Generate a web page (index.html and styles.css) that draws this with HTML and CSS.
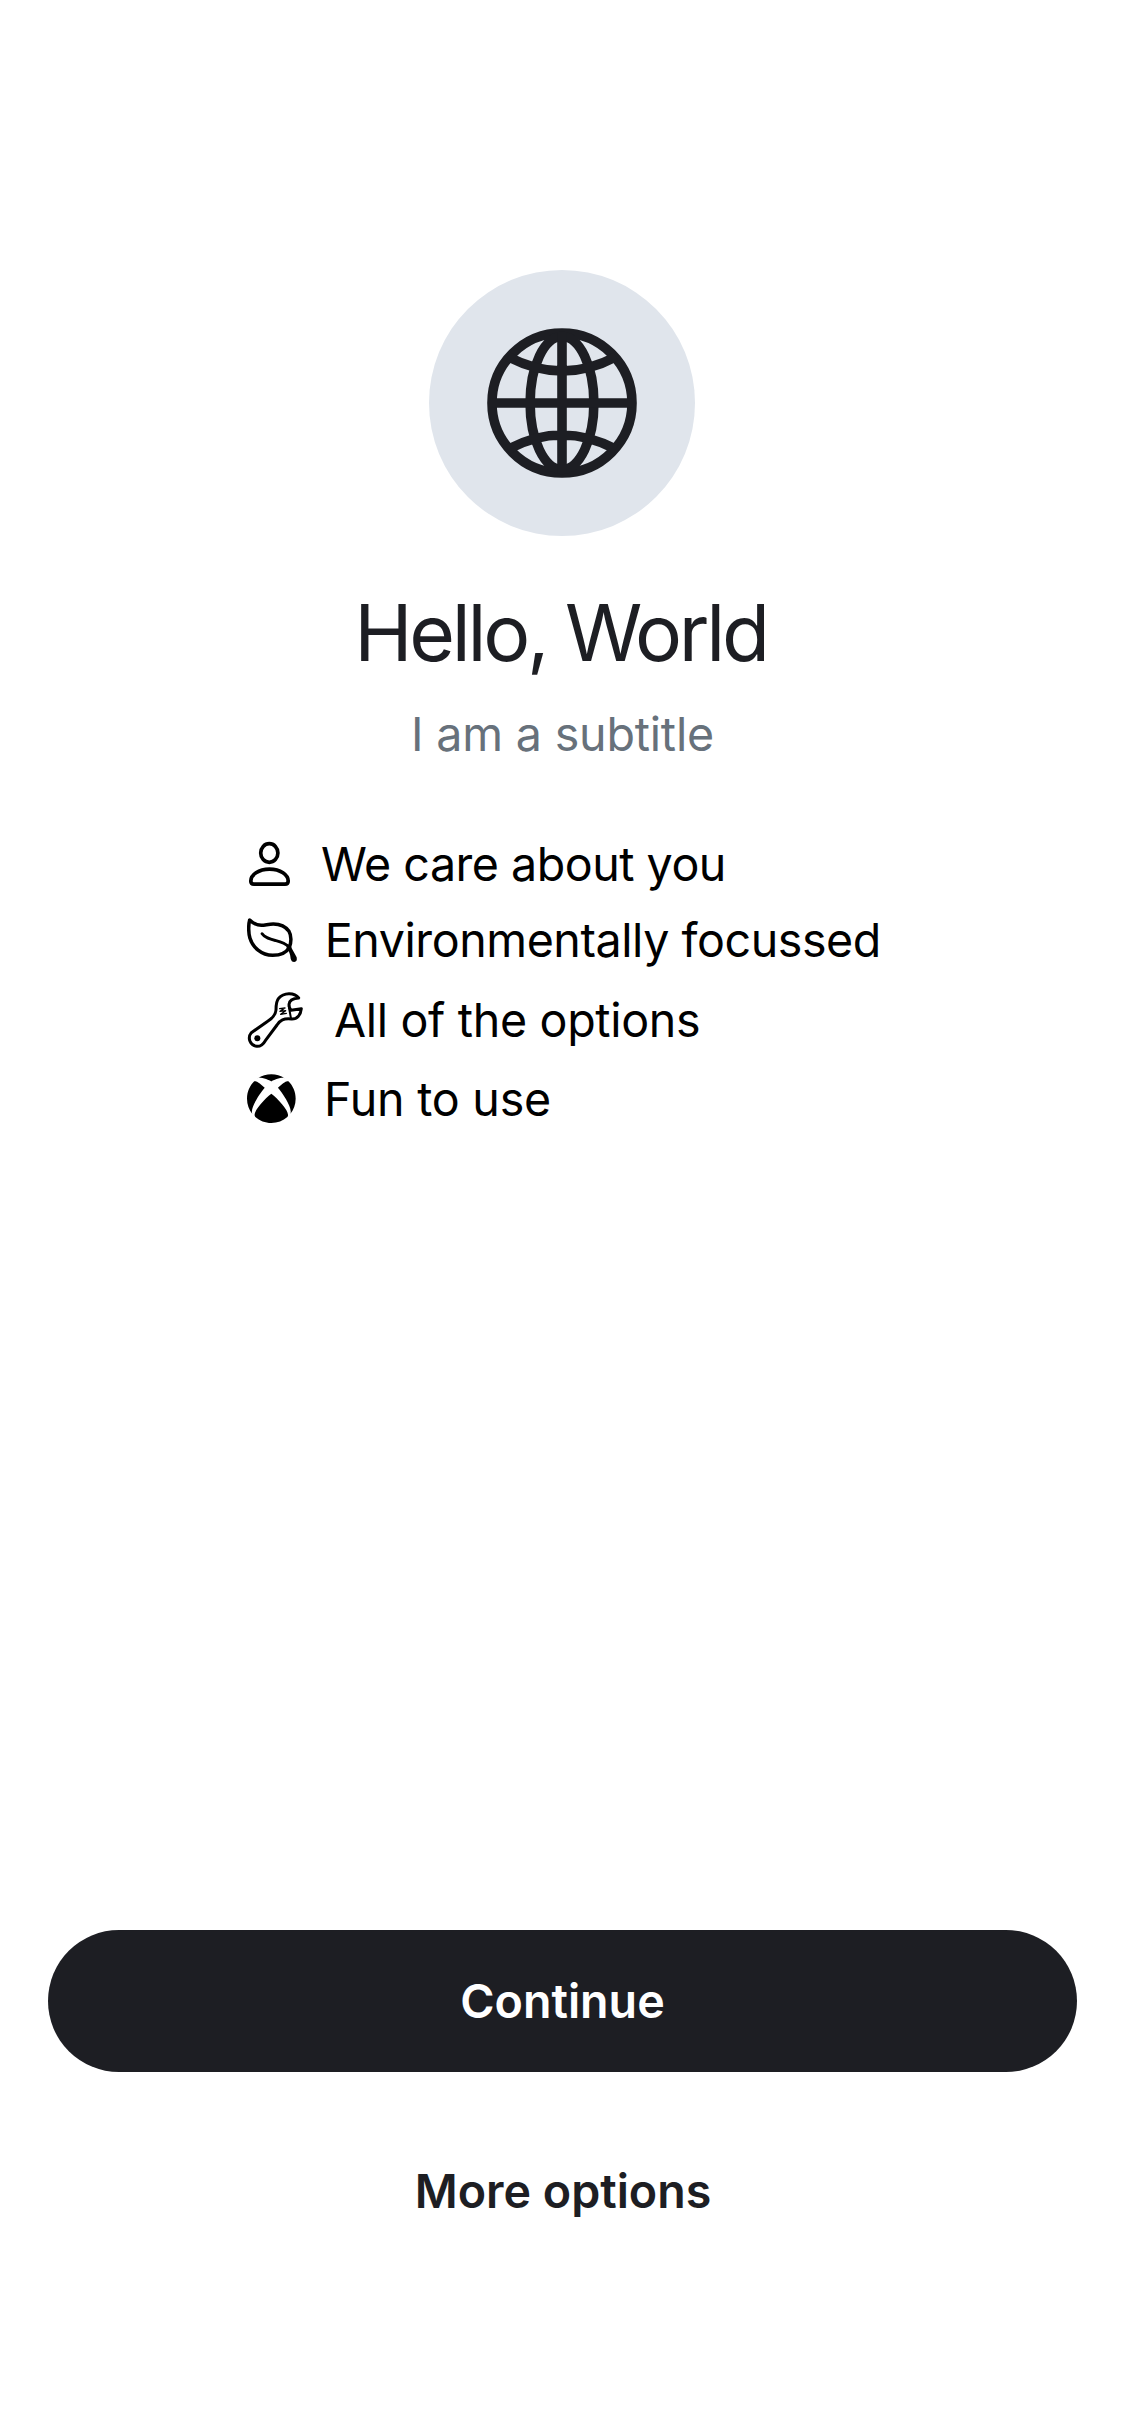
FILE: index.html
```html
<!DOCTYPE html>
<html lang="en">
<head>
<meta charset="utf-8">
<title>Hello, World</title>
<link rel="stylesheet" href="styles.css">
</head>
<body>
<main class="screen">
  <div class="badge">
    <svg class="globe" viewBox="-75 -75 150 150" fill="none" stroke="currentColor" stroke-width="9.6">
      <circle r="70"/>
      <ellipse rx="31.9" ry="66.5"/>
      <path d="M0-70V70M-70 0H70M-54-46.3Q0-17.7 54-46.3M-54 46.3Q0 17.7 54 46.3"/>
    </svg>
  </div>
  <h1 class="title">Hello, World</h1>
  <p class="subtitle">I am a subtitle</p>
  <ul class="features">
    <li class="feature care">
      <svg class="icon" viewBox="0 0 50 60" fill="none" stroke="currentColor" stroke-width="3.7">
        <ellipse cx="22.3" cy="19" rx="8.6" ry="9.3"/>
        <path d="M7 50.2H38Q41.2 50.2 41.2 47C41.2 41 33.5 35.1 22.5 35.1S3.8 41 3.8 47Q3.8 50.2 7 50.2Z"/>
      </svg>
      <span>We care about you</span>
    </li>
    <li class="feature environment">
      <svg class="icon" viewBox="36 240 161.4 180" fill="none" stroke="currentColor" stroke-width="10.5" stroke-linecap="round" stroke-linejoin="round">
        <path d="M44 270C40 284 40 310 45 325C53 352 79 376 113 376C137 376 154 368 163 352C169 338 170 317 162 304C151 288 134 282 115 282C100 282 91 286 79 286C64 286 54 280 44 270Z"/>
        <path stroke-width="8.5" d="M81 311C91 325 106 328 123 332C140 336 152 341 163 352"/>
        <path stroke="none" fill="currentColor" d="M155 343L167 346C171 360 181 373 185 382C187 391 184 396 178 396C171 396 169 392 167 386C166 373 162 362 155 354Z"/>
      </svg>
      <span>Environmentally focussed</span>
    </li>
    <li class="feature options">
      <svg class="icon" viewBox="36 21 189 198" fill="none" stroke="currentColor" stroke-width="9" stroke-linecap="round" stroke-linejoin="round">
        <path d="M49 158L96 125C114 114 122 105 123 90C123 72 124 63 131 55C146 37 178 36 191 54C172 55 163 62 162 73C162 82 164 87 168 91L199 86C197 105 187 118 169 117C145 115 136 120 126 135L91 182C84 194 76 200 65 199C46 197 36 174 49 158Z"/>
        <path stroke-width="6" d="M161 78L168 115"/>
        <path stroke-width="4" d="M134 86L150 84L135 94L152 92L137 103L154 100"/>
        <circle cx="67" cy="175" r="9" fill="currentColor" stroke="none"/>
      </svg>
      <span>All of the options</span>
    </li>
    <li class="feature fun">
      <svg class="icon" viewBox="0 -2.63 26.14 29.6" fill="currentColor">
        <path d="M4.102 21.033C6.211 22.881 8.977 24 12 24c3.026 0 5.789-1.119 7.902-2.967 1.877-1.912-4.316-8.709-7.902-11.417-3.582 2.708-9.779 9.505-7.898 11.417zm11.16-14.406c2.5 2.961 7.484 10.313 6.076 12.912C23.002 17.48 24 14.861 24 12.004c0-3.34-1.365-6.362-3.57-8.536 0 0-.027-.022-.082-.042-.063-.022-.152-.045-.281-.045-.592 0-1.985.434-4.805 3.246zM3.654 3.426c-.057.02-.082.041-.086.042C1.365 5.642 0 8.664 0 12.004c0 2.854.998 5.473 2.661 7.533-1.401-2.605 3.579-9.951 6.08-12.91-2.82-2.813-4.216-3.245-4.806-3.245-.131 0-.223.021-.281.046v-.002zM12 3.551S9.055 1.828 6.755 1.746c-.903-.033-1.454.295-1.521.339C7.379.646 9.659 0 11.984 0H12c2.334 0 4.605.646 6.766 2.085-.068-.046-.615-.372-1.52-.339C14.946 1.828 12 3.545 12 3.545v.006z"/>
      </svg>
      <span>Fun to use</span>
    </li>
  </ul>
  <div class="actions">
    <button class="button primary">Continue</button>
    <button class="button plain">More options</button>
  </div>
</main>
</body>
</html>
```

FILE: styles.css
```css
* {
  box-sizing: border-box;
}

body {
  margin: 0;
  background: #fff;
  color: #000;
  font-family: Inter, "Liberation Sans", sans-serif;
  font-size: 46.6px;
}

.screen {
  display: flex;
  flex-direction: column;
  align-items: center;
  height: 2436px;
  padding: 270px 48px 174px;
}

.badge {
  display: flex;
  align-items: center;
  justify-content: center;
  width: 266px;
  height: 266px;
  margin-right: 1px;
  padding-right: 0.6px;
  border-radius: 50%;
  background: #e0e5ec;
  color: #1d1e23;
}

.globe {
  width: 150px;
  height: 150px;
}

.title {
  margin: 48px 0 0;
  padding-right: 4px;
  color: #1d1e23;
  font-size: 78.5px;
  font-weight: 400;
  line-height: 97px;
  letter-spacing: -3.3px;
}

.subtitle {
  margin: 24px 0 0;
  color: #67717b;
  line-height: 58px;
  letter-spacing: -0.2px;
}

.features {
  align-self: flex-start;
  margin: 63px 0 0 199px;
  padding: 0;
  list-style: none;
}

.feature {
  display: flex;
  align-items: center;
  gap: 24px;
  height: 76px;
  white-space: nowrap;
}

.icon {
  flex: none;
  height: 60px;
}

.care {
  letter-spacing: -0.5px;
}

.care .icon {
  width: 50px;
}

.environment {
  letter-spacing: -0.44px;
}

.environment .icon {
  width: 53.8px;
}

.options {
  height: 84px;
  letter-spacing: -0.33px;
}

.options .icon {
  width: 63px;
  height: 66px;
}

.fun {
  height: 74px;
  letter-spacing: -0.23px;
}

.fun .icon {
  width: 53px;
}

.actions {
  display: flex;
  flex-direction: column;
  gap: 48px;
  width: 100%;
  margin-top: auto;
}

.button {
  height: 142px;
  padding: 0;
  border: 0;
  border-radius: 71px;
  background: none;
  color: #1d1e23;
  font: inherit;
  font-weight: 600;
}

.primary {
  background: #1d1e23;
  color: #fff;
}

.plain {
  padding-left: 1px;
}
```
